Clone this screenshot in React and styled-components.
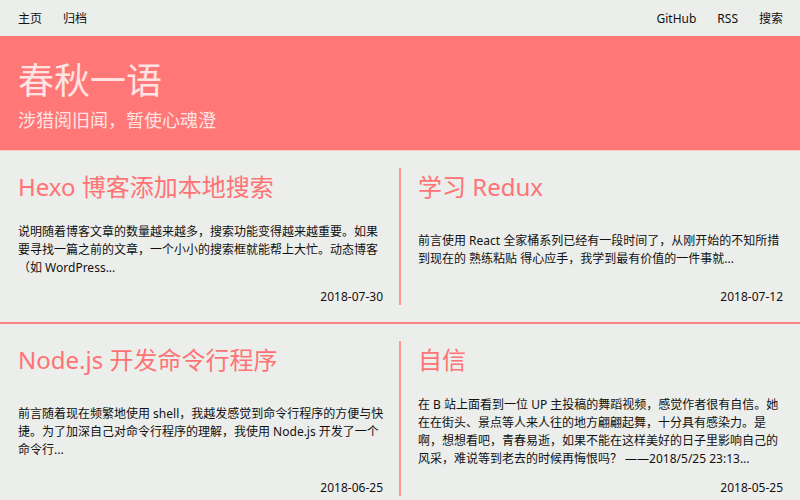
import React from "react";
import styled, { createGlobalStyle } from "styled-components";

const GlobalStyle = createGlobalStyle`
  * { box-sizing: border-box; }
  html { scrollbar-width: none; }
  body {
    margin: 0;
    background: #eceeeb;
    color: #111;
    font: 12px/18px "Noto Sans", "Noto Sans CJK SC", sans-serif;
  }
  a { color: inherit; text-decoration: none; }
  h1, h2, p { margin: 0; font-weight: 400; }
`;

const NavBar = styled.nav`
  display: flex;
  justify-content: space-between;
  padding: 10px 17px 8px 18px;
`;

const NavGroup = styled.div`
  display: flex;
  gap: 21px;
`;

const Banner = styled.header`
  padding: 19px 18px 16px;
  background: #ff7777;
  color: #ffe4e3;
  border-bottom: 1px solid #f6c8c6;
`;

const SiteTitle = styled.h1`
  font-size: 36px;
  line-height: 52px;
`;

const Subtitle = styled.p`
  font-size: 18px;
  line-height: 27px;
`;

const PostRow = styled.section`
  display: grid;
  grid-template-columns: 1fr 1fr;
  padding: 17px 0;
  border-bottom: 2px solid #fa8583;
`;

const Post = styled.article`
  display: flex;
  flex-direction: column;
  min-width: 0;
  padding: 0 12px 0 18px;

  & + & {
    position: relative;
  }

  & + &::before {
    content: "";
    position: absolute;
    inset: 0 auto 0 -1px;
    width: 2px;
    background: #fb9795;
  }
`;

const PostTitle = styled.h2`
  color: #ff7375;
  font-size: 24px;
  line-height: 38px;
`;

const Excerpt = styled.p`
  display: flex;
  flex: 1;
  align-items: center;
  padding: 17px 0 12px;
`;

const PostDate = styled.time`
  align-self: flex-end;
  padding-right: 5px;
  line-height: 16px;
`;

const rows = [
  [
    {
      title: "Hexo 博客添加本地搜索",
      text: "说明随着博客文章的数量越来越多，搜索功能变得越来越重要。如果要寻找一篇之前的文章，一个小小的搜索框就能帮上大忙。动态博客（如 WordPress...",
      date: "2018-07-30",
    },
    {
      title: "学习 Redux",
      text: "前言使用 React 全家桶系列已经有一段时间了，从刚开始的不知所措到现在的 熟练粘贴 得心应手，我学到最有价值的一件事就...",
      date: "2018-07-12",
    },
  ],
  [
    {
      title: "Node.js 开发命令行程序",
      text: "前言随着现在频繁地使用 shell，我越发感觉到命令行程序的方便与快捷。为了加深自己对命令行程序的理解，我使用 Node.js 开发了一个命令行...",
      date: "2018-06-25",
    },
    {
      title: "自信",
      text: "在 B 站上面看到一位 UP 主投稿的舞蹈视频，感觉作者很有自信。她在在街头、景点等人来人往的地方翩翩起舞，十分具有感染力。是啊，想想看吧，青春易逝，如果不能在这样美好的日子里影响自己的风采，难说等到老去的时候再悔恨吗？ ——2018/5/25 23:13...",
      date: "2018-05-25",
    },
  ],
];

export default function App() {
  return (
    <div lang="zh-CN">
      <GlobalStyle />
      <NavBar>
        <NavGroup>
          <a href="#home">主页</a>
          <a href="#archives">归档</a>
        </NavGroup>
        <NavGroup>
          <a href="#github">GitHub</a>
          <a href="#rss">RSS</a>
          <a href="#search">搜索</a>
        </NavGroup>
      </NavBar>
      <Banner>
        <SiteTitle>春秋一语</SiteTitle>
        <Subtitle>涉猎阅旧闻，暂使心魂澄</Subtitle>
      </Banner>
      <main>
        {rows.map((posts) => (
          <PostRow key={posts[0].date}>
            {posts.map((post) => (
              <Post key={post.date}>
                <PostTitle>
                  <a href={`#${post.date}`}>{post.title}</a>
                </PostTitle>
                <Excerpt>{post.text}</Excerpt>
                <PostDate dateTime={post.date}>{post.date}</PostDate>
              </Post>
            ))}
          </PostRow>
        ))}
      </main>
    </div>
  );
}
